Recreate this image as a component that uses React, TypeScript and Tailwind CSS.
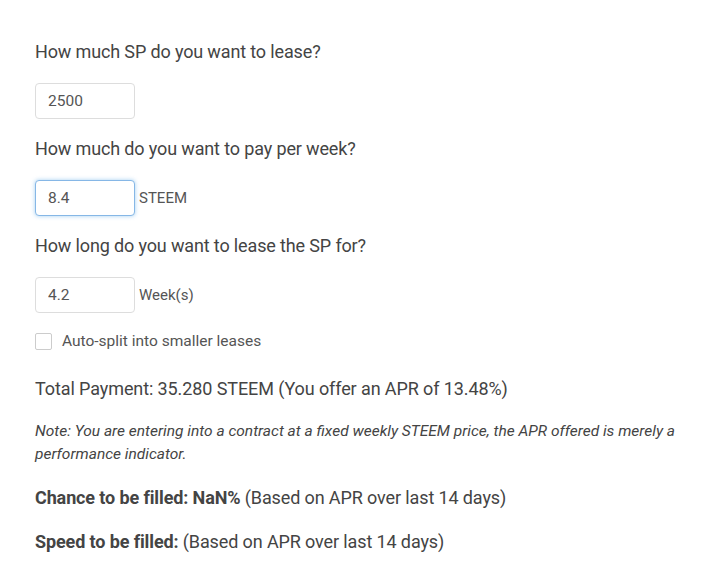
import { useState } from "react"

function Field({ value, unit, focused }: { value: string; unit?: string; focused?: boolean }) {
  return (
    <div className="flex items-center">
      <input
        defaultValue={value}
        className={
          "h-[36px] w-[100px] rounded-[4px] border bg-white px-3 text-[15.5px] text-[#555] outline-none " +
          (focused ? "border-[#86b7e6] shadow-[0_0_4px_rgba(102,175,233,0.6)]" : "border-[#ddd]")
        }
      />
      {unit && <span className="ml-1 text-[15px] text-[#555]">{unit}</span>}
    </div>
  )
}

export default function App() {
  const [split, setSplit] = useState(false)

  return (
    <div className="min-h-[574px] bg-white pl-[35px] pr-4 pt-[38px] text-[#444] [font-family:Roboto,'Liberation_Sans',sans-serif]">
      <h3 className="text-[18px] leading-[27px] tracking-[-0.14px]">How much SP do you want to lease?</h3>
      <div className="mt-[18px]">
        <Field value="2500" />
      </div>

      <h3 className="mt-[16px] text-[18px] leading-[27px] tracking-[-0.14px]">How much do you want to pay per week?</h3>
      <div className="mt-[18px]">
        <Field value="8.4" unit="STEEM" focused />
      </div>

      <h3 className="mt-[16px] text-[18px] leading-[27px] tracking-[-0.14px]">How long do you want to lease the SP for?</h3>
      <div className="mt-[18px]">
        <Field value="4.2" unit="Week(s)" />
      </div>

      <label className="mt-[17px] flex items-center gap-[10px] text-[15.5px] text-[#555]">
        <input
          type="checkbox"
          checked={split}
          onChange={(e) => setSplit(e.target.checked)}
          className="h-[17px] w-[17px] appearance-none rounded-[2px] border border-[#ccc] bg-white"
        />
        Auto-split into smaller leases
      </label>

      <p className="mt-[22px] text-[18px] leading-[27px] tracking-[-0.1px]">
        Total Payment: 35.280 STEEM (You offer an APR of 13.48%)
      </p>

      <p className="mt-[18px] text-[15.5px] italic leading-[23px]">
        Note: You are entering into a contract at a fixed weekly STEEM price, the APR offered is merely a performance
        indicator.
      </p>

      <p className="mt-[18px] text-[18px] leading-[27px] tracking-[-0.12px]">
        <span className="font-bold">Chance to be filled: NaN%</span> (Based on APR over last 14 days)
      </p>

      <p className="mt-[17px] text-[18px] leading-[27px] tracking-[-0.12px]">
        <span className="font-bold">Speed to be filled:</span> (Based on APR over last 14 days)
      </p>
    </div>
  )
}
